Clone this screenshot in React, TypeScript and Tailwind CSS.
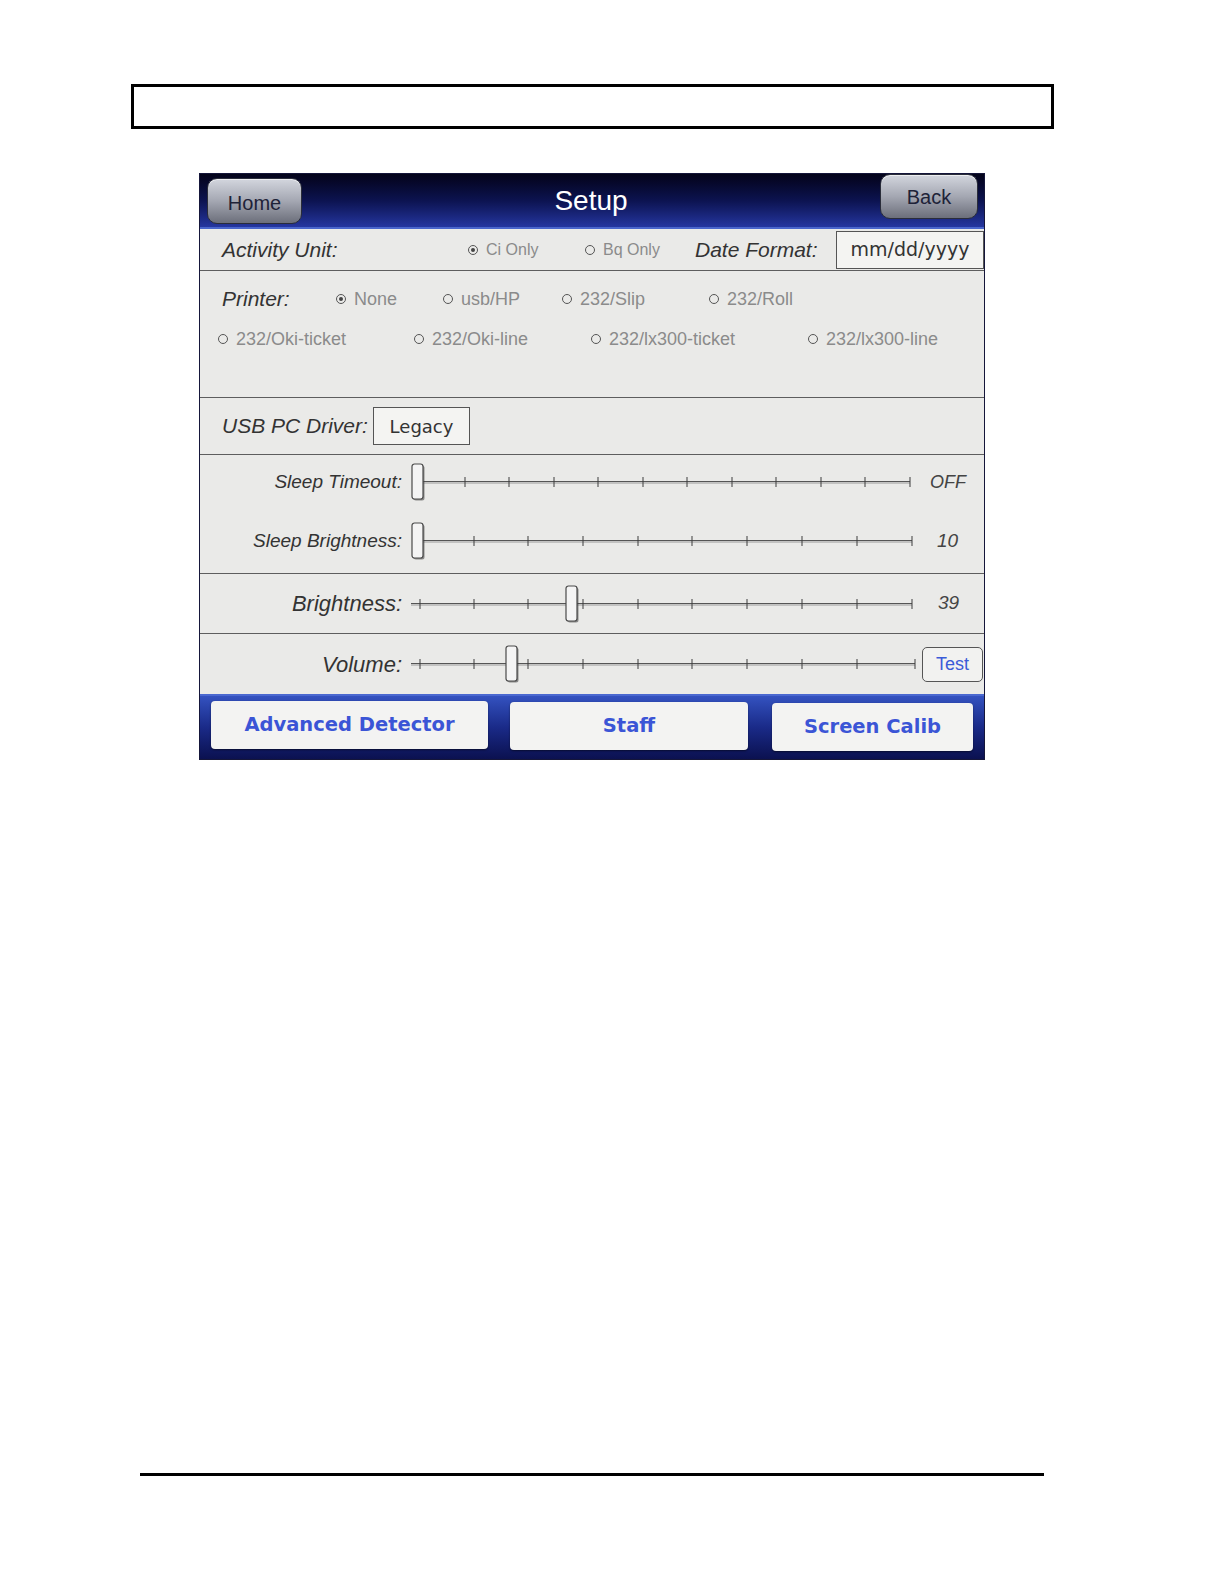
import React from "react";

const SANS = "font-['Liberation_Sans',Arial,sans-serif]";
const DEJAVU = "font-['DejaVu_Sans',Verdana,sans-serif]";

type SliderSpec = {
  width: number;
  trackStart: number;
  trackEnd: number;
  ticks: number[];
  thumb: number;
};

function Radio({ label, checked, className }: { label: string; checked?: boolean; className: string }) {
  return (
    <div className={`flex items-center gap-[8px] ${className}`}>
      <span className="flex h-[10px] w-[10px] shrink-0 items-center justify-center rounded-full border-[1.5px] border-[#555]">
        {checked && <span className="h-[4px] w-[4px] rounded-full bg-[#444]" />}
      </span>
      <span className="whitespace-nowrap leading-none text-[#8b8b8b]">{label}</span>
    </div>
  );
}

function Track({ spec }: { spec: SliderSpec }) {
  const { width, trackStart, trackEnd, ticks, thumb } = spec;
  return (
    <svg width={width} height={40} viewBox={`0 0 ${width} 40`} className="shrink-0">
      <line x1={trackStart} y1={19.5} x2={trackEnd} y2={19.5} stroke="#555" strokeWidth={1.2} />
      <line x1={trackStart} y1={21} x2={trackEnd} y2={21} stroke="#9a9a9a" strokeWidth={1} />
      {ticks.map((t) => (
        <line key={t} x1={t} y1={15} x2={t} y2={25} stroke="#3c3c3c" strokeWidth={1} />
      ))}
      <rect x={thumb + 1.5} y={3.5} width={11} height={35} rx={2.5} fill="#3a3a3a" opacity={0.55} />
      <rect x={thumb} y={2} width={11} height={35} rx={2.5} fill="#f4f4f4" stroke="#4a4a4a" strokeWidth={1.2} />
    </svg>
  );
}

function SliderRow({
  label,
  labelSize,
  spec,
  children,
}: {
  label: string;
  labelSize: string;
  spec: SliderSpec;
  children?: React.ReactNode;
}) {
  return (
    <div className="flex h-[40px] items-center">
      <div className={`w-[202px] shrink-0 text-right italic text-[#333] ${labelSize}`}>{label}</div>
      <div className="ml-[3px] flex items-center">
        <Track spec={spec} />
        {children}
      </div>
    </div>
  );
}

const wideTicks = [15, 69, 123, 178, 233, 287, 342, 397, 452, 507];

const sleepTimeout: SliderSpec = {
  width: 512,
  trackStart: 15,
  trackEnd: 505,
  ticks: [60, 104, 149, 193, 238, 282, 327, 371, 416, 460, 505],
  thumb: 7,
};
const sleepBrightness: SliderSpec = {
  width: 512,
  trackStart: 14,
  trackEnd: 507,
  ticks: [69, 123, 178, 233, 287, 342, 397, 452, 507],
  thumb: 7,
};
const brightness: SliderSpec = { width: 512, trackStart: 6, trackEnd: 507, ticks: wideTicks, thumb: 161 };
const volume: SliderSpec = { width: 512, trackStart: 6, trackEnd: 510, ticks: [...wideTicks.slice(0, 9), 510], thumb: 101 };

function HeaderButton({ label, className }: { label: string; className: string }) {
  return (
    <div
      className={`flex items-center justify-center rounded-[10px] border border-[#2a2d3a] bg-gradient-to-b from-[#d3d6de] via-[#a4a7b2] to-[#6c6f7b] text-[20px] text-[#1e2238] shadow-[inset_0_1px_0_rgba(255,255,255,0.6)] ${className}`}
    >
      {label}
    </div>
  );
}

function FooterButton({ label, className }: { label: string; className: string }) {
  return (
    <div
      className={`flex items-center justify-center rounded-[4px] bg-[#f3f3f2] ${DEJAVU} text-[19.5px] font-bold text-[#3b55d6] shadow-[0_1px_2px_rgba(0,0,0,0.5)] ${className}`}
    >
      {label}
    </div>
  );
}

export default function App() {
  return (
    <div className={`w-[1224px] bg-white pb-[40px] pt-[84px] ${SANS}`}>
      <div className="ml-[131px] h-[45px] w-[923px] border-[3px] border-black" />

      <div className="ml-[199px] mt-[44px] flex h-[587px] w-[786px] flex-col border border-[#15163a] bg-[#eaeae8]">
        {/* header */}
        <div className="grid h-[55px] shrink-0 grid-cols-[auto_1fr_auto] items-start border-b-2 border-[#4a66cc] bg-gradient-to-b from-[#04041a] via-[#0c1350] to-[#2536a0] pl-[7px] pr-[6px]">
          <HeaderButton label="Home" className="mt-[4px] h-[46px] w-[95px] pt-[3px]" />
          <div className="pt-[6px] text-center text-[28px] text-white">Setup</div>
          <HeaderButton label="Back" className="mt-0 h-[45px] w-[98px]" />
        </div>

        {/* activity unit / date format */}
        <div className="flex h-[42px] shrink-0 items-center border-b-[1.5px] border-[#5e5e5e] pl-[22px]">
          <div className="w-[246px] shrink-0 text-[21px] italic text-[#333]">Activity Unit:</div>
          <Radio label="Ci Only" checked className="w-[117px] shrink-0 text-[16px]" />
          <Radio label="Bq Only" className="w-[110px] shrink-0 text-[16px]" />
          <div className="w-[141px] shrink-0 text-[21px] italic text-[#333]">Date Format:</div>
          <div className={`flex h-[38px] w-[148px] shrink-0 items-center justify-center border border-[#555] bg-[#f4f4f2] ${DEJAVU} text-[19px] text-[#333]`}>
            mm/dd/yyyy
          </div>
        </div>

        {/* printer */}
        <div className="flex h-[127px] shrink-0 flex-col gap-[16px] border-b-[1.5px] border-[#5e5e5e] pt-[16px]">
          <div className="flex h-[24px] items-center pl-[22px] text-[18px]">
            <div className="w-[114px] shrink-0 text-[21px] italic text-[#333]">Printer:</div>
            <Radio label="None" checked className="w-[107px] shrink-0" />
            <Radio label="usb/HP" className="w-[119px] shrink-0" />
            <Radio label="232/Slip" className="w-[147px] shrink-0" />
            <Radio label="232/Roll" className="shrink-0" />
          </div>
          <div className="flex h-[24px] items-center pl-[18px] text-[18px]">
            <Radio label="232/Oki-ticket" className="w-[196px] shrink-0" />
            <Radio label="232/Oki-line" className="w-[177px] shrink-0" />
            <Radio label="232/lx300-ticket" className="w-[217px] shrink-0" />
            <Radio label="232/lx300-line" className="shrink-0" />
          </div>
        </div>

        {/* usb driver */}
        <div className="flex h-[57px] shrink-0 items-center border-b-[1.5px] border-[#5e5e5e] pl-[22px]">
          <div className="w-[151px] shrink-0 text-[21px] italic text-[#333]">USB PC Driver:</div>
          <div className={`flex h-[38px] w-[97px] items-center justify-center border border-[#555] bg-[#f4f4f2] ${DEJAVU} text-[18px] text-[#333]`}>
            Legacy
          </div>
        </div>

        {/* sleep */}
        <div className="flex h-[119px] shrink-0 flex-col gap-[19px] border-b-[1.5px] border-[#5e5e5e] pt-[7px]">
          <SliderRow label="Sleep Timeout:" labelSize="text-[19px]" spec={sleepTimeout}>
            <span className="ml-[13px] text-[18px] italic text-[#444]">OFF</span>
          </SliderRow>
          <SliderRow label="Sleep Brightness:" labelSize="text-[19px]" spec={sleepBrightness}>
            <span className="ml-[20px] text-[19px] italic text-[#444]">10</span>
          </SliderRow>
        </div>

        {/* brightness */}
        <div className="flex h-[60px] shrink-0 flex-col justify-center border-b-[1.5px] border-[#5e5e5e]">
          <SliderRow label="Brightness:" labelSize="text-[22px]" spec={brightness}>
            <span className="ml-[21px] text-[19px] italic text-[#444]">39</span>
          </SliderRow>
        </div>

        {/* volume */}
        <div className="flex h-[60px] shrink-0 flex-col justify-center">
          <SliderRow label="Volume:" labelSize="text-[22px]" spec={volume}>
            <div className="ml-[5px] flex h-[35px] w-[61px] items-center justify-center rounded-[5px] border border-[#555] bg-[#f2f2f0] text-[18px] text-[#3b5bd8]">
              Test
            </div>
          </SliderRow>
        </div>

        {/* footer */}
        <div className="flex flex-1 items-start border-t-2 border-[#4a68d0] bg-gradient-to-b from-[#3452c0] via-[#1a2a88] to-[#0b1150] pl-[11px]">
          <FooterButton label="Advanced Detector" className="mt-[5px] h-[48px] w-[277px]" />
          <FooterButton label="Staff" className="ml-[22px] mt-[6px] h-[48px] w-[238px]" />
          <FooterButton label="Screen Calib" className="ml-[24px] mt-[7px] h-[48px] w-[201px]" />
        </div>
      </div>

      <div className="ml-[140px] mt-[713px] h-[3px] w-[904px] bg-black" />
    </div>
  );
}
